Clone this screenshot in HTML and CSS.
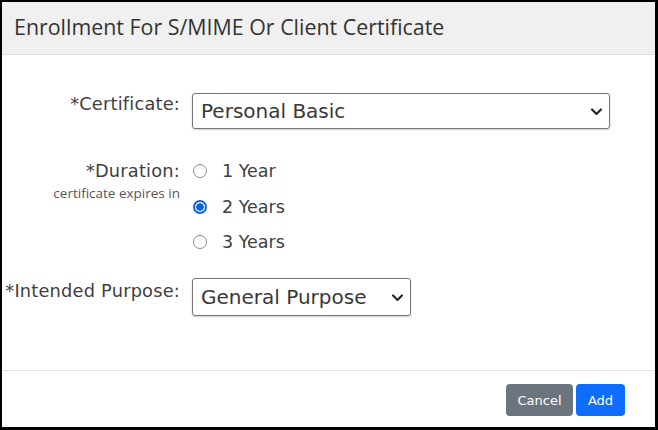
FILE: index.html
```html
<!DOCTYPE html>
<html>
<head>
<meta charset="utf-8">
<link rel="stylesheet" href="styles.css">
</head>
<body>
<div class="frame">
  <div class="modal">
    <div class="modal-header">
      <h1 class="title">Enrollment For S/MIME Or Client Certificate</h1>
    </div>
    <div class="modal-body">
      <div class="row row-cert">
        <div class="label"><span class="label-text">*Certificate:</span></div>
        <div class="control">
          <div class="select select-wide">
            <span>Personal Basic</span>
            <svg class="chev" viewBox="0 0 16 16" width="13" height="13"><path d="M2.5 5.5l5.5 5.5 5.5-5.5" fill="none" stroke="#222" stroke-width="2.6" stroke-linecap="round" stroke-linejoin="round"/></svg>
          </div>
        </div>
      </div>
      <div class="row row-dur">
        <div class="label">
          <span class="label-text">*Duration:</span>
          <span class="sub">certificate expires in</span>
        </div>
        <div class="control radios">
          <div class="radio-row"><span class="radio"></span><span class="radio-label">1 Year</span></div>
          <div class="radio-row"><span class="radio checked"></span><span class="radio-label">2 Years</span></div>
          <div class="radio-row"><span class="radio"></span><span class="radio-label">3 Years</span></div>
        </div>
      </div>
      <div class="row row-purpose">
        <div class="label"><span class="label-text">*Intended Purpose:</span></div>
        <div class="control">
          <div class="select select-narrow">
            <span>General Purpose</span>
            <svg class="chev" viewBox="0 0 16 16" width="13" height="13"><path d="M2.5 5.5l5.5 5.5 5.5-5.5" fill="none" stroke="#222" stroke-width="2.6" stroke-linecap="round" stroke-linejoin="round"/></svg>
          </div>
        </div>
      </div>
    </div>
    <div class="modal-footer">
      <button class="btn btn-cancel">Cancel</button>
      <button class="btn btn-add">Add</button>
    </div>
  </div>
</div>
</body>
</html>
```
FILE: styles.css
```css
html, body {
  margin: 0;
  padding: 0;
  background: #000;
}
.frame {
  padding: 2px 3px 3px 2px;
  height: 430px;
  box-sizing: border-box;
}
.modal {
  background: #fff;
  height: 425px;
  display: flex;
  flex-direction: column;
  font-family: "DejaVu Sans", sans-serif;
  color: #333;
}
.modal-header {
  background: #f0f0f0;
  border-bottom: 1px solid #dedede;
  height: 53px;
  box-sizing: border-box;
  display: flex;
  align-items: center;
  padding-left: 12px;
  padding-bottom: 4px;
}
.title {
  margin: 0;
  font-family: "Open Sans", sans-serif;
  font-weight: 400;
  font-size: 21.4px;
  color: #333;
}
.modal-body {
  flex: 1;
  padding-top: 38px;
}
.row {
  display: flex;
}
.label {
  width: 178px;
  text-align: right;
  display: flex;
  flex-direction: column;
  align-items: flex-end;
  flex: none;
}
.label-text {
  font-size: 17.8px;
  letter-spacing: 0.2px;
  color: #404040;
}
.sub {
  font-family: "Open Sans", sans-serif;
  font-size: 13.5px;
  color: #555;
  margin-top: 3px;
}
.control {
  margin-left: 12px;
}
.select {
  border: 1px solid #767676;
  border-radius: 3px;
  box-shadow: 0 1px 2px rgba(0,0,0,0.2);
  display: flex;
  align-items: center;
  justify-content: space-between;
  box-sizing: border-box;
  padding: 0 6px 0 8px;
  font-size: 20px;
  color: #383838;
}
.select-wide { width: 418px; height: 36px; }
.select-narrow { width: 219px; height: 38px; }
.row-cert .label { padding-top: 0; }
.row-dur { margin-top: 30px; }
.row-dur .label { padding-top: 1px; }
.radios { display: flex; flex-direction: column; gap: 11.5px; }
.radio-row { display: flex; align-items: center; height: 24px; }
.radio {
  width: 14px; height: 14px;
  border: 1px solid #8a8a8a;
  border-radius: 50%;
  box-sizing: border-box;
  margin-left: 1px;
  margin-right: 15px;
}
.radio.checked {
  border: 2px solid #0a66e0;
  background: radial-gradient(circle, #0a66e0 0 3.5px, #fff 4px);
}
.radio-label { font-size: 17.5px; color: #404040; }
.row-purpose { margin-top: 24px; }
.row-purpose .label { padding-top: 2px; }
.modal-footer {
  border-top: 1px solid #e2e2e2;
  height: 57px;
  box-sizing: border-box;
  display: flex;
  justify-content: flex-end;
  align-items: flex-start;
  padding-top: 13px;
  padding-right: 30px;
  gap: 3px;
}
.btn {
  border: none;
  border-radius: 4px;
  color: #fff;
  font-family: "DejaVu Sans", sans-serif;
  font-size: 13px;
  height: 32px;
  padding: 0 10px;
}
.btn-cancel { background: #6c757d; width: 67px; }
.btn-add { background: #0d6efd; width: 49px; }
```
